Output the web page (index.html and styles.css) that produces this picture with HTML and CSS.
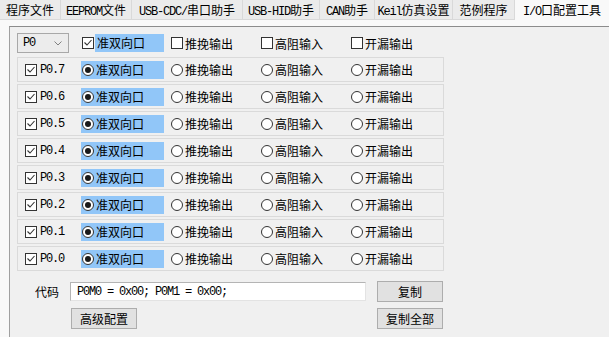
FILE: index.html
```html
<html lang="zh">
<head>
  <meta charset="UTF-8">
  <title>I/O口配置工具</title>
  <link rel="stylesheet" href="styles.css">
</head>
<body>
  <div class="tabs">
    <div class="tab t1">程序文件</div>
    <div class="tab t2"><span class="en">EEPROM</span>文件</div>
    <div class="tab t3"><span class="en">USB-CDC/</span>串口助手</div>
    <div class="tab t4"><span class="en">USB-HID</span>助手</div>
    <div class="tab t5"><span class="en">CAN</span>助手</div>
    <div class="tab t6"><span class="en">Keil</span>仿真设置</div>
    <div class="tab t7">范例程序</div>
    <div class="tab active"><span class="en">I/O</span>口配置工具</div>
  </div>

  <div class="frame">
    <!-- port select + set all -->
    <div class="toprow">
      <div class="combo">
        <span class="en">P0</span>
        <svg width="8" height="5" viewBox="0 0 8 5"><polyline points="0.5,0.5 4,4 7.5,0.5" fill="none" stroke="#808080" stroke-width="1"/></svg>
      </div>
      <div class="opt first"><span class="cb"><svg width="10" height="10" viewBox="0 0 10 10"><polyline points="1.5,4.5 4,7 8.5,2" fill="none" stroke="#333" stroke-width="1.1"/></svg></span><span class="hl">准双向口</span></div>
      <div class="opt"><span class="cb"></span><span>推挽输出</span></div>
      <div class="opt"><span class="cb"></span><span>高阻输入</span></div>
      <div class="opt"><span class="cb"></span><span>开漏输出</span></div>
    </div>

    <div class="pins">
      <div class="pin">
        <span class="cb"><svg width="10" height="10" viewBox="0 0 10 10"><polyline points="1.5,4.5 4,7 8.5,2" fill="none" stroke="#333" stroke-width="1.1"/></svg></span>
        <span class="pname en">P0.7</span>
        <div class="opt sel"><span class="rb on"></span>准双向口</div>
        <div class="opt"><span class="rb"></span>推挽输出</div>
        <div class="opt"><span class="rb"></span>高阻输入</div>
        <div class="opt"><span class="rb"></span>开漏输出</div>
      </div>
      <div class="pin">
        <span class="cb"><svg width="10" height="10" viewBox="0 0 10 10"><polyline points="1.5,4.5 4,7 8.5,2" fill="none" stroke="#333" stroke-width="1.1"/></svg></span>
        <span class="pname en">P0.6</span>
        <div class="opt sel"><span class="rb on"></span>准双向口</div>
        <div class="opt"><span class="rb"></span>推挽输出</div>
        <div class="opt"><span class="rb"></span>高阻输入</div>
        <div class="opt"><span class="rb"></span>开漏输出</div>
      </div>
      <div class="pin">
        <span class="cb"><svg width="10" height="10" viewBox="0 0 10 10"><polyline points="1.5,4.5 4,7 8.5,2" fill="none" stroke="#333" stroke-width="1.1"/></svg></span>
        <span class="pname en">P0.5</span>
        <div class="opt sel"><span class="rb on"></span>准双向口</div>
        <div class="opt"><span class="rb"></span>推挽输出</div>
        <div class="opt"><span class="rb"></span>高阻输入</div>
        <div class="opt"><span class="rb"></span>开漏输出</div>
      </div>
      <div class="pin">
        <span class="cb"><svg width="10" height="10" viewBox="0 0 10 10"><polyline points="1.5,4.5 4,7 8.5,2" fill="none" stroke="#333" stroke-width="1.1"/></svg></span>
        <span class="pname en">P0.4</span>
        <div class="opt sel"><span class="rb on"></span>准双向口</div>
        <div class="opt"><span class="rb"></span>推挽输出</div>
        <div class="opt"><span class="rb"></span>高阻输入</div>
        <div class="opt"><span class="rb"></span>开漏输出</div>
      </div>
      <div class="pin">
        <span class="cb"><svg width="10" height="10" viewBox="0 0 10 10"><polyline points="1.5,4.5 4,7 8.5,2" fill="none" stroke="#333" stroke-width="1.1"/></svg></span>
        <span class="pname en">P0.3</span>
        <div class="opt sel"><span class="rb on"></span>准双向口</div>
        <div class="opt"><span class="rb"></span>推挽输出</div>
        <div class="opt"><span class="rb"></span>高阻输入</div>
        <div class="opt"><span class="rb"></span>开漏输出</div>
      </div>
      <div class="pin">
        <span class="cb"><svg width="10" height="10" viewBox="0 0 10 10"><polyline points="1.5,4.5 4,7 8.5,2" fill="none" stroke="#333" stroke-width="1.1"/></svg></span>
        <span class="pname en">P0.2</span>
        <div class="opt sel"><span class="rb on"></span>准双向口</div>
        <div class="opt"><span class="rb"></span>推挽输出</div>
        <div class="opt"><span class="rb"></span>高阻输入</div>
        <div class="opt"><span class="rb"></span>开漏输出</div>
      </div>
      <div class="pin">
        <span class="cb"><svg width="10" height="10" viewBox="0 0 10 10"><polyline points="1.5,4.5 4,7 8.5,2" fill="none" stroke="#333" stroke-width="1.1"/></svg></span>
        <span class="pname en">P0.1</span>
        <div class="opt sel"><span class="rb on"></span>准双向口</div>
        <div class="opt"><span class="rb"></span>推挽输出</div>
        <div class="opt"><span class="rb"></span>高阻输入</div>
        <div class="opt"><span class="rb"></span>开漏输出</div>
      </div>
      <div class="pin">
        <span class="cb"><svg width="10" height="10" viewBox="0 0 10 10"><polyline points="1.5,4.5 4,7 8.5,2" fill="none" stroke="#333" stroke-width="1.1"/></svg></span>
        <span class="pname en">P0.0</span>
        <div class="opt sel"><span class="rb on"></span>准双向口</div>
        <div class="opt"><span class="rb"></span>推挽输出</div>
        <div class="opt"><span class="rb"></span>高阻输入</div>
        <div class="opt"><span class="rb"></span>开漏输出</div>
      </div>
    </div>

    <!-- generated code -->
    <div class="code">
      <span class="code-label">代码</span>
      <div class="code-box en">P0M0 = 0x00; P0M1 = 0x00;</div>
      <button class="btn">复制</button>
      <button class="btn adv">高级配置</button>
      <button class="btn">复制全部</button>
    </div>
  </div>
</body>
</html>
```

FILE: styles.css
```css
body {
  margin: 0;
  height: 100vh;
  display: flex;
  flex-direction: column;
  background-color: #f9f9f9;
  font-family: "Noto Sans CJK SC", sans-serif;
  font-size: 12px;
  color: #000;
  overflow: hidden;
}

.en {
  font-family: "Liberation Mono", monospace;
  letter-spacing: -1.2px;
}

/* Tab strip */
.tabs {
  display: flex;
  align-items: flex-start;
  height: 26px;
  flex-shrink: 0;
}

.tab {
  height: 19px;
  line-height: 19px;
  text-align: center;
  background-color: #ebebeb;
  border-right: 1px solid #d9d9d9;
  border-bottom: 1px solid #d9d9d9;
  box-sizing: content-box;
  white-space: nowrap;
}

.t1 { width: 60px; }
.t2 { width: 70px; }
.t3 { width: 110px; }
.t4 { width: 76px; }
.t5 { width: 54px; }
.t6 { width: 77px; }
.t7 { width: 61px; }

.tab.active {
  flex: 1;
  height: 26px;
  line-height: 20px;
  text-align: left;
  padding-left: 8px;
  background-color: #f9f9f9;
  border: none;
}

/* Main panel */
.frame {
  flex: 1;
  margin-left: 9px;
  padding: 6px 0 0 7px;
  background-color: #f0f0f0;
  border-top: 1px solid #8c8c8c;
  border-left: 1px solid #a0a0a0;
}

.toprow {
  display: flex;
  align-items: center;
  height: 20px;
}

.combo {
  width: 52px;
  height: 20px;
  box-sizing: border-box;
  margin-right: 12px;
  padding: 0 6px 0 5px;
  display: flex;
  align-items: center;
  justify-content: space-between;
  border: 1px solid #a8a8a8;
  background-color: #ececec;
}

.opt {
  width: 90px;
  display: flex;
  align-items: center;
  gap: 2px;
  white-space: nowrap;
}

.toprow .opt.first {
  gap: 1px;
}

.toprow .opt.first .cb {
  margin-left: 1px;
}

.toprow .hl {
  width: 67px;
  height: 18px;
  line-height: 18px;
  padding-left: 2px;
  background-color: #91c6f8;
}

.cb {
  width: 12px;
  height: 12px;
  box-sizing: border-box;
  border: 1px solid #333;
  background-color: #fff;
  display: inline-flex;
  align-items: center;
  justify-content: center;
  flex-shrink: 0;
}

.rb {
  width: 12px;
  height: 12px;
  box-sizing: border-box;
  border: 1px solid #333;
  border-radius: 50%;
  background-color: #fff;
  display: inline-flex;
  align-items: center;
  justify-content: center;
  flex-shrink: 0;
}

.rb.on::after {
  content: "";
  width: 6px;
  height: 6px;
  border-radius: 50%;
  background-color: #1a1a1a;
}

/* Pin rows */
.pins {
  display: flex;
  flex-direction: column;
  gap: 2px;
  margin-top: 4px;
}

.pin {
  width: 427px;
  height: 25px;
  box-sizing: border-box;
  display: flex;
  align-items: center;
  padding-left: 7px;
  border: 1px solid #dadada;
}

.pname {
  width: 41px;
  margin-left: 3px;
}

.pin .opt.sel {
  width: 82px;
  height: 18px;
  margin-right: 7px;
  padding-left: 1px;
  background-color: #91c6f8;
}

/* Code output */
.code {
  display: grid;
  grid-template-columns: 42px 296px 66px;
  column-gap: 11px;
  row-gap: 6px;
  align-items: center;
  margin-top: 10px;
}

.code-label {
  padding-left: 18px;
}

.code-box {
  height: 19px;
  line-height: 19px;
  box-sizing: border-box;
  padding-left: 6px;
  background-color: #fff;
  border: 1px solid #e3e3e3;
  border-top-color: #b4b4b4;
  border-left-color: #b4b4b4;
  font-size: 12px;
}

.btn {
  height: 21px;
  padding: 0;
  font-family: "Noto Sans CJK SC", sans-serif;
  font-size: 12px;
  color: #000;
  background-color: #e1e1e1;
  border: 1px solid #adadad;
}

.btn.adv {
  grid-column: 2;
  width: 66px;
  margin-left: 1px;
}
```
